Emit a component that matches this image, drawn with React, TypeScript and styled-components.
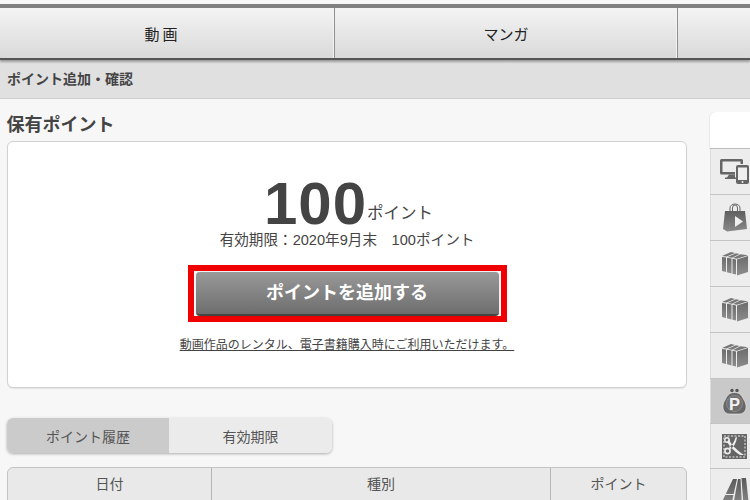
import { createGlobalStyle, styled } from 'styled-components';

const GlobalStyle = createGlobalStyle`
  html, body {
    margin: 0;
    padding: 0;
    height: 100%;
    overflow: hidden;
    background: #f7f7f7;
  }
  * {
    box-sizing: border-box;
  }
  body {
    font-family: "Liberation Sans", "Noto Sans CJK JP", sans-serif;
    color: #444;
  }
`;

const BoxesIcon = () => (
  <svg width="26" height="25" viewBox="0 0 26 25">
    <defs>
      <linearGradient id="boxFill" x1="0" y1="0" x2="0" y2="1">
        <stop offset="0" stopColor="#6c6c6c" />
        <stop offset="1" stopColor="#8c8c8c" />
      </linearGradient>
    </defs>
    <path d="M0 6 L4 6.5 V21 L0 20Z" fill="url(#boxFill)" />
    <path d="M5 6.8 L9.5 7.5 V22.5 L5 21.2Z" fill="url(#boxFill)" />
    <path d="M10.5 7.8 L14 8.5 V23.5 L10.5 22.7Z" fill="url(#boxFill)" />
    <path d="M15 8.5 L26 5 V21 L15 24.5Z" fill="url(#boxFill)" />
    <path d="M0 5 L9 1 L13 2 L4.5 5.5Z M5.5 6 L14 2.3 L17.5 3 L10 6.8Z M11 7 L18.5 3.3 L26 4.2 L15 7.7Z" fill="#777" />
  </svg>
);

const DevicesIcon = () => (
  <svg width="29" height="25" viewBox="0 0 29 25">
    <path d="M1.5 0 H21.5 A1.5 1.5 0 0 1 23 1.5 V5 H20.5 V2.5 H2.5 V13 H15 V15.5 H1.5 A1.5 1.5 0 0 1 0 14 V1.5 A1.5 1.5 0 0 1 1.5 0Z" fill="#666" />
    <path d="M7 18.5 L9 15.5 H15 V18.5 H16 V20 H5 V18.5Z" fill="#666" />
    <rect x="16" y="6" width="13" height="19" rx="2" fill="#666" />
    <rect x="18" y="8.5" width="9" height="12.5" fill="#eee" />
    <circle cx="22.5" cy="23" r="1" fill="#eee" />
  </svg>
);

const BagIcon = () => (
  <svg width="24" height="29" viewBox="0 0 24 29">
    <defs>
      <linearGradient id="bagFill" x1="0" y1="0" x2="0" y2="1">
        <stop offset="0" stopColor="#5f5f5f" />
        <stop offset="1" stopColor="#8a8a8a" />
      </linearGradient>
    </defs>
    <path d="M7 9 V5 a5 4 0 0 1 10 0 V9 M9.5 9 V5 a2.5 3 0 0 1 5 0 V9" fill="none" stroke="#666" strokeWidth="1" />
    <path d="M2 8 H22 L24 26 L4 28.5 L0 26Z" fill="url(#bagFill)" />
    <path d="M12 13 L20 18.5 L12 24Z" fill="#f0f0f0" />
  </svg>
);

const PurseIcon = () => (
  <svg width="25" height="27" viewBox="0 0 25 27">
    <circle cx="10" cy="2.5" r="1.7" fill="#555" />
    <circle cx="15" cy="2.5" r="1.7" fill="#555" />
    <path d="M12.5 4.5 C18.5 4.5 20 8.5 22 12 C25.5 17 25 26 17 26 H8 C0 26 -0.5 17 3 12 C5 8.5 6.5 4.5 12.5 4.5Z" fill="#676767" stroke="#f0f0f0" strokeWidth="0.6" />
    <circle cx="12.5" cy="15.5" r="8" fill="#707070" stroke="#8c8c8c" strokeWidth="1" />
    <text x="12.5" y="21.5" textAnchor="middle" fontFamily="Liberation Sans" fontWeight="700" fontSize="16.5" fill="#f2f2f2">P</text>
  </svg>
);

const CouponIcon = () => (
  <svg width="25" height="25" viewBox="0 0 25 25">
    <rect width="25" height="25" fill="#666" />
    <rect x="2" y="2" width="21" height="21" fill="none" stroke="#eee" strokeWidth="1" strokeDasharray="2 1.5" />
    <path d="M7 5 C8 9 13 15 22 21 L18 21 C13 18 8 13 5 8Z M15 3 L13.5 3.5 C12.5 8 10 11 7 13 L8.5 15 C12 13 14.5 8 15 3Z" fill="#eee" />
    <circle cx="5.5" cy="17" r="2.6" fill="none" stroke="#eee" strokeWidth="1.6" />
    <circle cx="5" cy="6" r="2.2" fill="none" stroke="#eee" strokeWidth="1.4" />
  </svg>
);

const RoadIcon = () => (
  <svg width="29" height="28" viewBox="0 0 29 28">
    <defs>
      <linearGradient id="roadFill" x1="0" y1="0" x2="0" y2="1">
        <stop offset="0" stopColor="#5a5a5a" />
        <stop offset="1" stopColor="#8a8a8a" />
      </linearGradient>
    </defs>
    <path d="M13 1 H17 L11 28 H0Z" fill="url(#roadFill)" />
    <path d="M18 1 H20.5 L22 28 H13Z" fill="url(#roadFill)" />
    <path d="M21.5 0 H26 L29 28 H23.5Z" fill="url(#roadFill)" />
    <path d="M4 16 H15 V17 H3.4Z" fill="#eee" />
  </svg>
);

const sideItems = [
  { key: 'devices', icon: <DevicesIcon />, height: 46 },
  { key: 'bag', icon: <BagIcon />, height: 46 },
  { key: 'box-1', icon: <BoxesIcon />, height: 46 },
  { key: 'box-2', icon: <BoxesIcon />, height: 46 },
  { key: 'box-3', icon: <BoxesIcon />, height: 46 },
  { key: 'purse', icon: <PurseIcon />, height: 45, active: true },
  { key: 'coupon', icon: <CouponIcon />, height: 45 },
  { key: 'road', icon: <RoadIcon />, height: 46 },
];

const App = () => {
  return (
    <Page>
      <GlobalStyle />
      <TopGap />
      <Nav>
        <NavItem $width={335} $wide>動画</NavItem>
        <NavItem $width={343}>マンガ</NavItem>
        <NavItem $width={72} />
      </Nav>
      <Breadcrumb>ポイント追加・確認</Breadcrumb>
      <Body>
        <Main>
          <Title>保有ポイント</Title>
          <Card>
            <PointsRow>
              <PointsValue>100</PointsValue>
              <PointsUnit>ポイント</PointsUnit>
            </PointsRow>
            <Expiry>有効期限：2020年9月末　100ポイント</Expiry>
            <Highlight>
              <AddButton>ポイントを追加する</AddButton>
            </Highlight>
            <Note>動画作品のレンタル、電子書籍購入時にご利用いただけます。</Note>
          </Card>
          <Segments>
            <Segment $active>ポイント履歴</Segment>
            <Segment>有効期限</Segment>
          </Segments>
          <Table>
            <HeadCell $width={204}>日付</HeadCell>
            <HeadCell $width={339}>種別</HeadCell>
            <HeadCell $width={135}>ポイント</HeadCell>
          </Table>
        </Main>
        <Sidebar>
          <SideBlank />
          {sideItems.map((item) => (
            <SideItem key={item.key} $active={item.active} $height={item.height}>
              {item.icon}
            </SideItem>
          ))}
        </Sidebar>
      </Body>
    </Page>
  );
};

export default App;

const Page = styled.div`
  width: 750px;
  height: 500px;
  overflow: hidden;
  display: flex;
  flex-direction: column;
  background: #f7f7f7;
`;

const TopGap = styled.div`
  height: 4px;
  flex: none;
  background: #f7f7f7;
`;

const Nav = styled.nav`
  flex: none;
  display: flex;
  height: 56px;
  border-top: 4px solid #808080;
  border-bottom: 2px solid #555;
  background: linear-gradient(#f4f4f4, #d9d9d9);
  position: relative;
  z-index: 1;
  box-shadow: 0 2px 2px rgba(0, 0, 0, 0.3);
`;

const NavItem = styled.div<{ $width: number; $wide?: boolean }>`
  flex: none;
  width: ${({ $width }) => $width}px;
  padding-right: ${({ $wide }) => ($wide ? '9px' : '0')};
  display: flex;
  align-items: center;
  justify-content: center;
  border-right: 1px solid #8f8f8f;
  box-shadow: inset -1px 0 0 #f4f4f4;
  font-size: 15px;
  letter-spacing: ${({ $wide }) => ($wide ? '3px' : '0')};
  color: #222;

  &:last-child {
    border-right: none;
    box-shadow: none;
  }
`;

const Breadcrumb = styled.div`
  flex: none;
  height: 39px;
  padding: 0 7px 3px;
  display: flex;
  align-items: center;
  background: #e0e0e0;
  border-bottom: 1px solid #cfcfcf;
  font-size: 14px;
  font-weight: 700;
  color: #444;
`;

const Body = styled.div`
  flex: 1;
  min-height: 0;
  display: flex;
  justify-content: space-between;
`;

const Main = styled.main`
  width: 710px;
  padding: 15px 23px 0 7px;
`;

const Title = styled.h2`
  margin: 0 0 4px -0.5px;
  height: 23px;
  line-height: 23px;
  font-size: 18px;
  font-weight: 700;
  color: #444;
`;

const Card = styled.section`
  height: 247px;
  padding-top: 35px;
  display: flex;
  flex-direction: column;
  align-items: center;
  background: #fff;
  border: 1px solid #d2d2d2;
  border-radius: 6px;
  box-shadow: 0 1px 1px rgba(0, 0, 0, 0.08);
`;

const PointsRow = styled.div`
  display: flex;
  align-items: flex-start;
  height: 54px;
  margin-left: 3px;
`;

const PointsValue = styled.span`
  font-size: 60px;
  line-height: 54px;
  font-weight: 700;
  letter-spacing: 1px;
  color: #444;
`;

const PointsUnit = styled.span`
  margin-top: 28px;
  font-size: 16.5px;
  line-height: 17px;
  color: #444;
`;

const Expiry = styled.p`
  margin: 0;
  font-size: 14.6px;
  line-height: 18px;
  color: #444;
`;

const Highlight = styled.div`
  width: 319px;
  height: 57px;
  margin-top: 16px;
  padding: 1px;
  display: flex;
  justify-content: center;
  border: 6px solid #f00000;
  background: #fff;
`;

const AddButton = styled.button`
  width: 303px;
  height: 44px;
  padding: 0 0 5px;
  border: none;
  border-bottom: 2px solid #444;
  border-radius: 4px;
  background: linear-gradient(#999, #6e6e6e);
  box-shadow: 0 0 1px rgba(0, 0, 0, 0.5);
  font-family: inherit;
  font-size: 18px;
  font-weight: 700;
  color: #fff;
`;

const Note = styled.a`
  margin-top: 16px;
  font-size: 12px;
  line-height: 14px;
  color: #444;
  text-decoration: underline;
`;

const Segments = styled.div`
  display: flex;
  width: 325px;
  height: 35px;
  margin-top: 30px;
  border-radius: 6px;
  overflow: hidden;
  box-shadow: 0 1px 3px rgba(0, 0, 0, 0.3);
`;

const Segment = styled.div<{ $active?: boolean }>`
  flex: none;
  width: ${({ $active }) => ($active ? '162px' : '163px')};
  display: flex;
  align-items: center;
  justify-content: center;
  font-size: 14px;
  color: #555;
  background: ${({ $active }) => ($active ? '#cbcbcb' : '#ebebeb')};
`;

const Table = styled.div`
  display: flex;
  height: 40px;
  margin-top: 14px;
  background: #e9e9e9;
  border: 1px solid #c4c4c4;
  border-radius: 6px 6px 0 0;
`;

const HeadCell = styled.div<{ $width: number }>`
  flex: none;
  width: ${({ $width }) => $width}px;
  padding-bottom: 9px;
  display: flex;
  align-items: center;
  justify-content: center;
  border-right: 1px solid #b5b5b5;
  font-size: 14px;
  color: #555;

  &:last-child {
    border-right: none;
  }
`;

const Sidebar = styled.aside`
  width: 40px;
  padding-top: 13px;
  display: flex;
  flex-direction: column;
`;

const SideBlank = styled.div`
  flex: none;
  height: 37px;
  background: #fff;
  border-radius: 6px 0 0 0;
  border-bottom: 1px solid #bdbdbd;
  box-shadow: -1px 0 1px rgba(0, 0, 0, 0.06);
`;

const SideItem = styled.div<{ $active?: boolean; $height: number }>`
  flex: none;
  height: ${({ $height }) => $height}px;
  padding-left: 9px;
  display: flex;
  align-items: center;
  justify-content: center;
  background: ${({ $active }) => ($active ? '#c9c9c9' : '#ededed')};
  border-bottom: 1px solid #c4c4c4;
  box-shadow: inset 1px 0 0 #ddd;
`;
